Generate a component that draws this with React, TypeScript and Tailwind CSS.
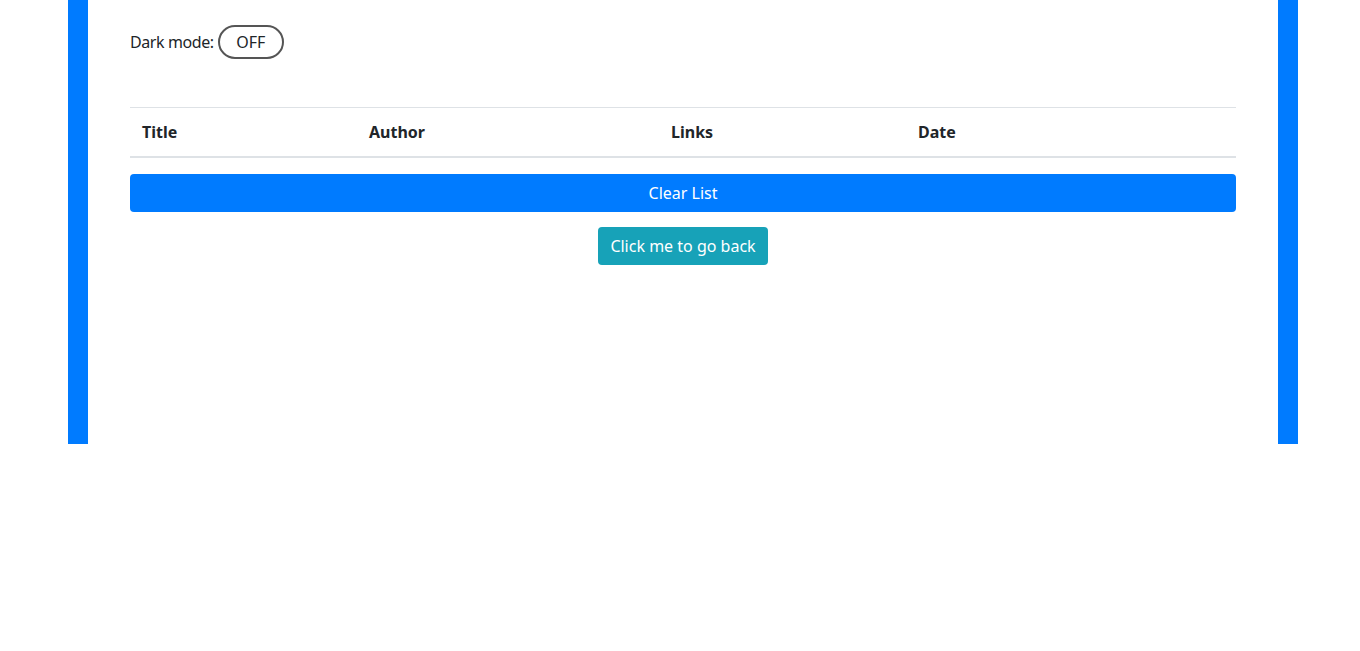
export default function App() {
  return (
    <div className="min-h-[651px] bg-white font-['Noto_Sans',sans-serif] text-[16px] text-[#212529]">
      <div className="ml-[68px] h-[444px] w-[1230px] border-x-[20px] border-[#007bff] px-[42px] pt-[25px]">
        {/* Dark mode toggle */}
        <div className="flex h-[34px] items-center gap-1">
          <span className="tracking-[-0.4px]">Dark mode:</span>
          <button className="flex h-[34px] w-[66px] items-center justify-center rounded-full border-2 border-[#555] text-[#212529]">
            OFF
          </button>
        </div>

        {/* Table */}
        <table className="mt-[48px] w-full border-collapse text-left">
          <thead>
            <tr className="border-t border-[#dee2e6]">
              <th className="w-[227px] border-b-2 border-[#dee2e6] p-3 font-bold leading-6">Title</th>
              <th className="w-[302px] border-b-2 border-[#dee2e6] p-3 font-bold leading-6">Author</th>
              <th className="w-[247px] border-b-2 border-[#dee2e6] p-3 font-bold leading-6">Links</th>
              <th className="border-b-2 border-[#dee2e6] p-3 font-bold leading-6">Date</th>
            </tr>
          </thead>
        </table>

        <button className="mt-4 block h-[38px] w-full rounded bg-[#007bff] text-white">Clear List</button>

        <div className="mt-[15px] flex justify-center">
          <button className="h-[38px] rounded bg-[#17a2b8] px-3 text-white">Click me to go back</button>
        </div>
      </div>
    </div>
  )
}
